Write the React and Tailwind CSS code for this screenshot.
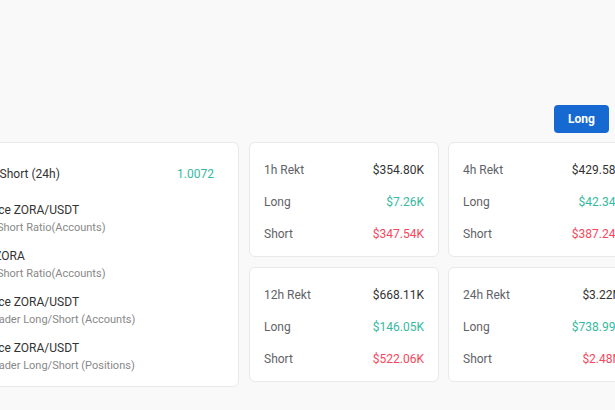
import React from 'react';

const FONT = { fontFamily: 'Roboto, "Noto Sans", "Liberation Sans", sans-serif' };

const RATIOS = [
  { title: 'Binance ZORA/USDT', sub: 'Long/Short Ratio(Accounts)' },
  { title: 'OKX ZORA', sub: 'Long/Short Ratio(Accounts)' },
  { title: 'Binance ZORA/USDT', sub: 'Top Trader Long/Short (Accounts)' },
  { title: 'Binance ZORA/USDT', sub: 'Top Trader Long/Short (Positions)' },
];

const REKT = [
  { label: '1h Rekt', total: '$354.80K', long: '$7.26K', short: '$347.54K' },
  { label: '4h Rekt', total: '$429.58K', long: '$42.34K', short: '$387.24K' },
  { label: '12h Rekt', total: '$668.11K', long: '$146.05K', short: '$522.06K' },
  { label: '24h Rekt', total: '$3.22M', long: '$738.99K', short: '$2.48M' },
];

const RektCard = ({ item }) => (
  <div className="w-[190px] h-[115px] bg-white border border-[#e9e9e9] rounded-[6px] px-[14px] pt-[19px] flex flex-col gap-[16px] text-[12px] leading-[16px]">
    <div className="flex justify-between">
      <span className="text-[#5f6368]">{item.label}</span>
      <span className="text-[#333]">{item.total}</span>
    </div>
    <div className="flex justify-between">
      <span className="text-[#5f6368]">Long</span>
      <span className="text-[#35b9a0]">{item.long}</span>
    </div>
    <div className="flex justify-between">
      <span className="text-[#5f6368]">Short</span>
      <span className="text-[#f5475c]">{item.short}</span>
    </div>
  </div>
);

export default function App() {
  return (
    <div className="w-[615px] h-[410px] overflow-hidden bg-[#f9f9f9]" style={FONT}>
      <div className="ml-[-57px] w-[730px] pt-[105px] flex flex-col gap-[9px]">
        {/* side toggle */}
        <div className="flex justify-end pr-[64px]">
          <button className="w-[55px] h-[28px] rounded-[4px] bg-[#1769d2] text-white text-[12px] font-bold">
            Long
          </button>
        </div>

        <div className="flex items-start gap-[10px]">
          {/* Ratios card */}
          <div className="shrink-0 w-[296px] h-[245px] bg-white border border-[#e9e9e9] rounded-[6px] px-[24px] pt-[23px]">
            <div className="flex justify-between text-[12px] leading-[16px]">
              <span className="text-[#333]">Long/Short (24h)</span>
              <span className="text-[#35b9a0]">1.0072</span>
            </div>
            <div className="mt-[20px] flex flex-col gap-[12px]">
              {RATIOS.map((r, i) => (
                <div key={i} className="flex flex-col gap-[2px]">
                  <span className="text-[12px] leading-[16px] text-[#333]">{r.title}</span>
                  <span className="text-[11px] leading-[16px] text-[#888]">{r.sub}</span>
                </div>
              ))}
            </div>
          </div>

          {/* Rekt cards */}
          <div className="shrink-0 grid grid-cols-[190px_190px] gap-y-[10px] gap-x-[9px]">
            {REKT.map((item) => (
              <RektCard key={item.label} item={item} />
            ))}
          </div>
        </div>
      </div>
    </div>
  );
}
